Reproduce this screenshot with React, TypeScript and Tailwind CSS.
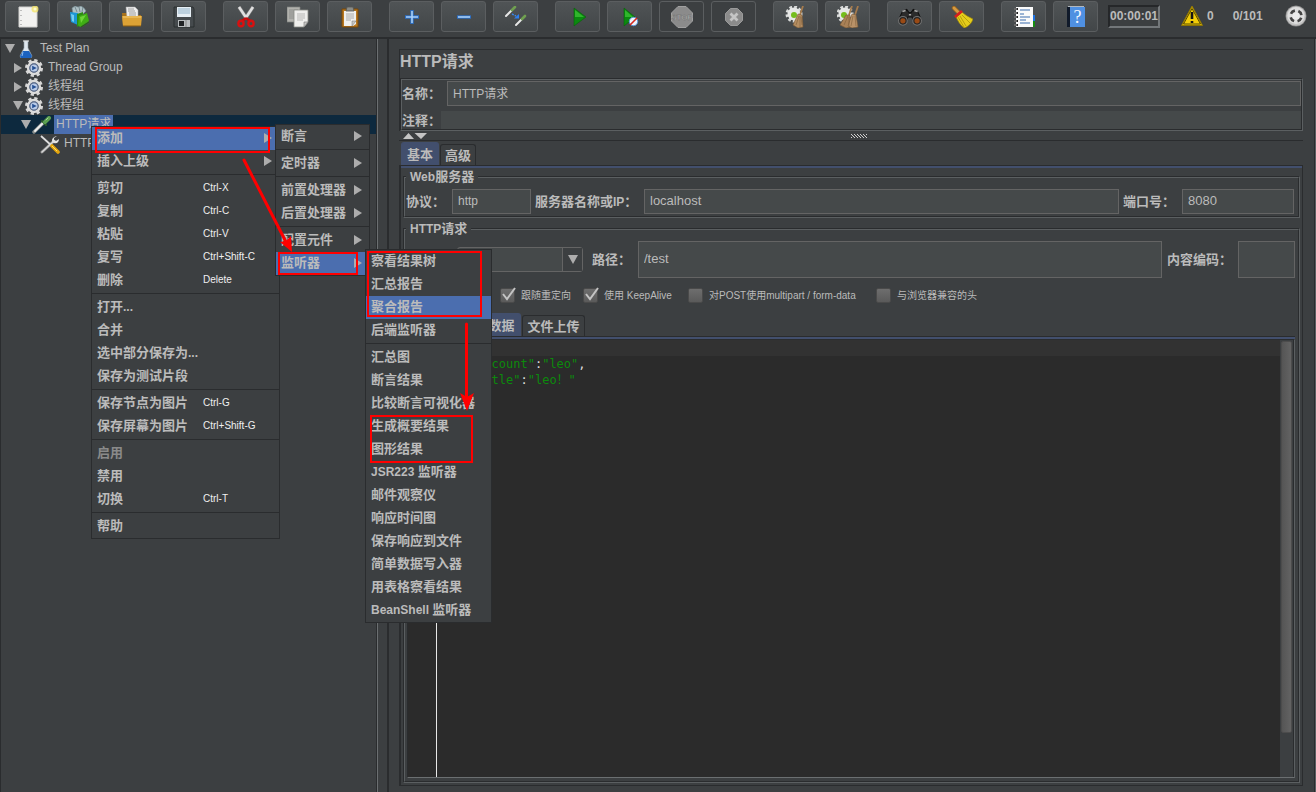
import React from 'react';
import clsx from 'clsx';

/* ---------- Toolbar icons ---------- */

const icon = (children: React.ReactNode, size = 22) => (
  <svg width={size} height={size} viewBox="0 0 22 22" fill="none" aria-hidden="true">
    {children}
  </svg>
);

const NewIcon = icon(
  <>
    <path d="M2 1h18v20H2z" fill="#f2f2f0" stroke="#d2d2d0" />
    <path d="M4 4v1M4 9v1M4 14v1M4 18v1" stroke="#8a8a8a" strokeWidth="1" />
    <circle cx="18" cy="3" r="3.5" fill="#f3e36b" opacity="0.8" />
    <circle cx="18" cy="3" r="1.5" fill="#fffbd0" />
  </>
);

const TemplatesIcon = icon(
  <>
    <path d="M3 2l3-2 3 1 3-1 3 2 2 3-4 4-9-1z" fill="#aebfc4" stroke="#6f858c" strokeWidth="0.6" />
    <path d="M6 1l2 5M10 1l1 5M14 1l-1 5" stroke="#5c7279" strokeWidth="0.7" />
    <path d="M1 6l8 1v12l-7-3z" fill="#1c97d6" />
    <path d="M2 8l3 1v7l-2-1z" fill="#73cdf2" />
    <path d="M8 8l6-2v12l-6 3z" fill="#2c8d12" />
    <path d="M10 10l8-3 2 8-9 6-2-2z" fill="#3fae14" />
    <path d="M11 11l6-2-5 8z" fill="#6fd53a" />
    <path d="M12 21l8-5" stroke="#226f0c" />
  </>
);

const OpenIcon = icon(
  <>
    <path d="M1 7h6l1 2h12v11H2z" fill="#a8721b" />
    <path d="M5 1h9l3 3v8H6z" fill="#efefef" stroke="#aaa" strokeWidth="0.5" />
    <path d="M7 3h6M7 5h7M8 7h7M8 9h7" stroke="#8b8b8b" strokeWidth="0.8" />
    <path d="M1 10h20l-1 10H2z" fill="#dca235" />
    <path d="M2 11h18" stroke="#f4cc75" />
    <path d="M2 20h18" stroke="#8a5c12" />
  </>
);

const SaveIcon = icon(
  <>
    <path d="M1 1h19l1 2v18H1z" fill="#454a4d" stroke="#24282a" strokeWidth="0.8" />
    <path d="M4 1h14v10H4z" fill="#e6eef4" />
    <path d="M5 3h12M5 5h12M5 7h12" stroke="#93b3c9" strokeWidth="1" />
    <path d="M5 14h12v7H5z" fill="#b8bcbe" />
    <path d="M6 15h5v5H6z" fill="#202325" />
    <path d="M13 14v7" stroke="#888" />
  </>
);

const CutIcon = icon(
  <>
    <path d="M4 1l8 12M18 1l-8 12" stroke="#777" strokeWidth="3.8" />
    <path d="M4 1l8 12M18 1l-8 12" stroke="#e0e0e0" strokeWidth="2.6" />
    <path d="M11 12l-4 3M11 12l4 3" stroke="#c60d0d" strokeWidth="2.8" />
    <ellipse cx="6" cy="17.5" rx="2.6" ry="2.8" stroke="#d81010" strokeWidth="2.4" />
    <ellipse cx="16" cy="17.5" rx="2.6" ry="2.8" stroke="#d81010" strokeWidth="2.4" />
  </>
);

const CopyIcon = icon(
  <>
    <path d="M0 1h13v15H0z" fill="#b1b1ad" stroke="#7f817e" strokeWidth="0.7" />
    <path d="M2 4h9M2 6h5M2 8h5M2 10h5M2 12h5" stroke="#8c8e8b" />
    <path d="M7 4h14v12l-4 5H7z" fill="#eeeeec" stroke="#888a85" strokeWidth="0.8" />
    <path d="M10 8h8M10 10h8M10 12h8M10 14h6" stroke="#b7b7b5" />
    <path d="M21 16h-4v5z" fill="#c8c8c6" stroke="#777" strokeWidth="0.6" />
  </>
);

const PasteIcon = icon(
  <>
    <path d="M3 3h16v18H3z" fill="#b9781f" stroke="#79490b" />
    <path d="M5 5h12v13l-3 2H5z" fill="#efefed" />
    <path d="M8 1h6l1 4H7z" fill="#8a8c88" stroke="#555753" strokeWidth="0.8" />
    <path d="M7 8h8M7 10h8M7 12h8M7 14h5" stroke="#aaa" />
    <path d="M17 15h-4v5z" fill="#c9c9c7" stroke="#777" strokeWidth="0.5" />
  </>
);

const PlusIcon = icon(
  <>
    <path d="M11 4v14M4 11h14" stroke="#2c6fc5" strokeWidth="3.4" />
    <path d="M11 5v12M5 11h12" stroke="#a9d0f7" strokeWidth="1.6" />
  </>
);

const MinusIcon = icon(
  <>
    <path d="M4 11h14" stroke="#2c6fc5" strokeWidth="3.4" />
    <path d="M5 11h12" stroke="#a9d0f7" strokeWidth="1.6" />
  </>
);

const ToggleIcon = icon(
  <>
    <path d="M1 10l6-6" stroke="#e6e6e6" strokeWidth="2" strokeLinecap="round" />
    <path d="M7 4l3-3" stroke="#6f9f50" strokeWidth="2.6" strokeLinecap="round" />
    <path d="M11 19l6-6" stroke="#e6e6e6" strokeWidth="2" strokeLinecap="round" />
    <path d="M17 13l3-3" stroke="#6f9f50" strokeWidth="2.6" strokeLinecap="round" />
    <path d="M7 8l4 2" stroke="#3a86e8" strokeWidth="1.5" strokeDasharray="2 1" />
    <path d="M14 8v4.500h-5z" fill="#2d7ff0" />
  </>
);

const StartIcon = icon(
  <>
    <path d="M7 2l12 9-12 9z" fill="#0b8a10" stroke="#0a5f0c" strokeWidth="0.6" />
    <path d="M8 4l9 7H8z" fill="#30b62c" />
  </>
);

const StartNoPauseIcon = icon(
  <>
    <path d="M5 2l11 9-11 9z" fill="#0b8a10" stroke="#0a5f0c" strokeWidth="0.6" />
    <path d="M6 4l8 7H6z" fill="#30b62c" />
    <circle cx="14.500" cy="15.500" r="4.200" fill="#eef4fc" stroke="#5c94d6" strokeWidth="1" />
    <path d="M11 19l7-7" stroke="#d8281e" strokeWidth="1.600" />
  </>
);

const StopIcon = icon(
  <>
    <path d="M7 .5h8l6.500 6.500v8L15 21.500H7L.5 15V7z" fill="#8b8b8b" stroke="#a0a0a0" />
    <text x="11" y="14" textAnchor="middle" fontSize="8" fontWeight="bold" fontFamily="Liberation Sans" fill="#b8b8b8" stroke="#6a6a6a" strokeWidth="0.4">
      STOP
    </text>
  </>
);

const ShutdownIcon = icon(
  <>
    <path d="M7.500 2.500h7l5 5v7l-5 5h-7l-5-5v-7z" fill="#8b8b8b" stroke="#9a9a9a" />
    <path d="M7.500 7.500l7 7M14.500 7.500l-7 7" stroke="#c4c4c4" strokeWidth="2.800" />
  </>
);

const Gear = ({ cx, cy, r }: { cx: number; cy: number; r: number }) => (
  <g>
    <circle cx={cx} cy={cy} r={r} stroke="#d8dad9" strokeWidth="3" strokeDasharray="2.7 2" />
    <circle cx={cx} cy={cy} r={r - 0.5} fill="#e6e7e6" />
  </g>
);

const ClearIcon = icon(
  <>
    <Gear cx={9} cy={8} r={7} />
    <circle cx="9" cy="9" r="3" fill="#75bd1c" />
    <path d="M18 0l-3 9" stroke="#a57b4d" strokeWidth="1.800" />
    <path d="M13 8l4 1 1 12-5 1-5-3z" fill="#b48d61" stroke="#7c5a36" strokeWidth="0.600" />
    <path d="M14 10l-3 9M15 10l0 11M16 11l1 8" stroke="#80603d" strokeWidth="0.600" />
  </>
);

const ClearAllIcon = icon(
  <>
    <Gear cx={8} cy={8} r={7} />
    <circle cx="7" cy="9" r="3" fill="#75bd1c" />
    <path d="M15 0l-3 9M21 0l-3 9" stroke="#a57b4d" strokeWidth="1.800" />
    <path d="M9 9l4 0 1 12-5 1-6-3z" fill="#a98157" stroke="#7c5a36" strokeWidth="0.600" />
    <path d="M15 8l4 1 2 12-6 1-4-2z" fill="#b99268" stroke="#7c5a36" strokeWidth="0.600" />
    <path d="M11 10l-4 9M12 11l0 10M16 10l-2 10M18 10l1 10" stroke="#80603d" strokeWidth="0.600" />
  </>
);

const SearchIcon = icon(
  <>
    <path d="M4 6l4-2 2 3h2l2-3 4 2 4 9h-8l-1-4h-4l-1 4H0z" fill="#2b2b2b" stroke="#111" />
    <path d="M4 6l3-1M15 5l3 1M10 9h2" stroke="#a9a9a9" strokeWidth="1.400" />
    <circle cx="4.500" cy="14.500" r="4" fill="#252525" stroke="#737373" />
    <circle cx="17.500" cy="14.500" r="4" fill="#252525" stroke="#737373" />
    <circle cx="4.500" cy="14.500" r="2.400" fill="#9a4a15" />
    <circle cx="17.500" cy="14.500" r="2.400" fill="#9a4a15" />
  </>,
  24
);

const BroomIcon = icon(
  <>
    <path d="M3 2l6 6" stroke="#96631d" strokeWidth="4.400" strokeLinecap="round" />
    <path d="M3 2l5 5" stroke="#d59a42" strokeWidth="2.800" strokeLinecap="round" />
    <path d="M11 6c3 3 7 5 11 7-1 4-5 8-9 9-4-3-6-7-8-11z" fill="#e5cd1b" stroke="#96830a" strokeWidth="0.700" />
    <path d="M9 10l6 10M11 9l8 8M7 11l6 10" stroke="#a99209" strokeWidth="0.800" />
    <path d="M4 11l7-6" stroke="#d61f1f" strokeWidth="2.800" />
  </>
);

const FunctionsIcon = icon(
  <>
    <path d="M18 9h4v6h-4z" fill="#1e72e2" />
    <path d="M18 15h4v6h-4z" fill="#168c12" />
    <path d="M3 1h17v20H3z" fill="#fafafa" />
    <path d="M7 4h10M7 8h4M7 11h10M7 14h6M7 17h10" stroke="#3a6cae" strokeWidth="1" />
    <path d="M1 3h4M1 7h4M1 11h4M1 15h4M1 19h4" stroke="#1d1d1d" strokeWidth="2" />
    <path d="M1 3h3M1 7h3M1 11h3M1 15h3M1 19h3" stroke="#ddd" strokeWidth="0.800" />
  </>
);

const HelpIcon = icon(
  <>
    <path d="M2 1h3v20H2z" fill="#101a2a" />
    <path d="M5 1h15v20H5z" fill="#4f90e2" />
    <path d="M3 0h16" stroke="#d5dbe2" strokeWidth="1.500" />
    <text x="12.500" y="17" textAnchor="middle" fontSize="18" fontFamily="Liberation Serif" fill="#f4f8ff">
      ?
    </text>
  </>
);

const WarningIcon = icon(
  <>
    <path d="M11 1L21.500 20.500H.5z" fill="#f3cd08" stroke="#8d7303" />
    <path d="M11 3.500L19.500 19h-17z" stroke="#2c2600" strokeWidth="0.800" />
    <path d="M11 7v7M11 16v2" stroke="#151515" strokeWidth="2.600" />
  </>
);

const StatusIcon = icon(
  <>
    <circle cx="11" cy="11" r="10.500" fill="#8c8c8c" />
    <circle cx="11" cy="11" r="9.800" fill="#c2c2c2" />
    <circle cx="11" cy="10.500" r="8.500" fill="#dedede" />
    <circle cx="11" cy="11" r="5.500" stroke="#444" strokeWidth="2.600" strokeDasharray="5 3.640" strokeDashoffset="-1.800" />
    <circle cx="11" cy="11" r="3.500" fill="#ececec" />
  </>
);

/* ---------- Tree icons ---------- */

const FlaskIcon = (
  <svg width="14" height="18" viewBox="0 0 14 18" aria-hidden="true">
    <path d="M5 1h4v7l4 8-1 2H2l-1-2 4-8z" fill="#dfe7ee" stroke="#8e9aa5" strokeWidth="0.6" />
    <path d="M4 11h6l3 5-1 2H2l-1-2z" fill="#1b62c0" />
    <path d="M4 12l-1 4" stroke="#8fc0f5" />
    <path d="M4 1h6" stroke="#f5f5f5" />
  </svg>
);

const GearIcon = (
  <svg width="18" height="18" viewBox="0 0 20 20" fill="none" aria-hidden="true">
    <circle cx="10" cy="10" r="8.5" stroke="#d6d6d6" strokeWidth="3" strokeDasharray="3.6 3.075" />
    <circle cx="10" cy="10" r="6.5" stroke="#dcdcdc" strokeWidth="3" />
    <circle cx="10" cy="10" r="4.6" fill="#b9cbe8" stroke="#5a6c8e" strokeWidth="1.4" />
    <path d="M8 7.500l5 2.500-5 2.500z" fill="#244f94" />
  </svg>
);

const PipetteIcon = (
  <svg width="20" height="18" viewBox="0 0 20 18" fill="none" strokeLinecap="round" aria-hidden="true">
    <path d="M2 16L11 7" stroke="#8b8f8d" strokeWidth="3.4" />
    <path d="M3 15l8-8" stroke="#f0f0f0" strokeWidth="1.8" />
    <path d="M10 5l4 4" stroke="#2d5c2a" strokeWidth="2" />
    <path d="M13 6l4-4" stroke="#5b9f50" strokeWidth="4" />
    <path d="M14 4l2-2" stroke="#a3d396" strokeWidth="1" />
  </svg>
);

const ToolsIcon = (
  <svg width="20" height="20" viewBox="0 0 20 20" fill="none" aria-hidden="true">
    <path d="M2 18L14 7" stroke="#8f8f8f" strokeWidth="3" strokeLinecap="round" />
    <path d="M2 18L14 7" stroke="#d8d8d8" strokeWidth="1.400" strokeLinecap="round" />
    <path d="M17 2l-3 2v2l2 1 3-2c0 3-2 5-5 4s-3-6 3-7z" fill="#e2e2e2" />
    <path d="M1 2l11 10" stroke="#dedede" strokeWidth="1.800" />
    <path d="M12 12l6 6" stroke="#e3a50d" strokeWidth="3.600" strokeLinecap="round" />
    <path d="M12 12l5 5" stroke="#ffe064" strokeWidth="1" />
  </svg>
);

/* ---------- Data ---------- */

interface ToolItem {
  label: string;
  icon: React.ReactNode;
  disabled?: boolean;
}

const toolGroups: ToolItem[][] = [
  [
    { label: '新建', icon: NewIcon },
    { label: '模板', icon: TemplatesIcon },
    { label: '打开', icon: OpenIcon },
    { label: '保存', icon: SaveIcon },
  ],
  [
    { label: '剪切', icon: CutIcon },
    { label: '复制', icon: CopyIcon },
    { label: '粘贴', icon: PasteIcon },
  ],
  [
    { label: '展开', icon: PlusIcon },
    { label: '折叠', icon: MinusIcon },
    { label: '切换', icon: ToggleIcon },
  ],
  [
    { label: '启动', icon: StartIcon },
    { label: '不停顿开始', icon: StartNoPauseIcon },
    { label: '停止', icon: StopIcon, disabled: true },
    { label: '关闭', icon: ShutdownIcon, disabled: true },
  ],
  [
    { label: '清除', icon: ClearIcon },
    { label: '清除全部', icon: ClearAllIcon },
  ],
  [
    { label: '查找', icon: SearchIcon },
    { label: '重置搜索', icon: BroomIcon },
  ],
  [
    { label: '函数助手', icon: FunctionsIcon },
    { label: '帮助', icon: HelpIcon },
  ],
];

interface TreeNode {
  label: string;
  indent: string;
  icon: React.ReactNode;
  state?: 'open' | 'closed';
  selected?: boolean;
}

const tree: TreeNode[] = [
  { label: 'Test Plan', indent: 'pl-[3px]', icon: FlaskIcon, state: 'open' },
  { label: 'Thread Group', indent: 'pl-[11px]', icon: GearIcon, state: 'closed' },
  { label: '线程组', indent: 'pl-[11px]', icon: GearIcon, state: 'closed' },
  { label: '线程组', indent: 'pl-[11px]', icon: GearIcon, state: 'open' },
  { label: 'HTTP请求', indent: 'pl-[19px]', icon: PipetteIcon, state: 'open', selected: true },
  { label: 'HTTP信息头管理器', indent: 'pl-[27px]', icon: ToolsIcon },
];

interface MenuEntry {
  label: string;
  shortcut?: string;
  submenu?: boolean;
  active?: boolean;
  disabled?: boolean;
}

const mainMenu: MenuEntry[][] = [
  [
    { label: '添加', submenu: true, active: true },
    { label: '插入上级', submenu: true },
  ],
  [
    { label: '剪切', shortcut: 'Ctrl-X' },
    { label: '复制', shortcut: 'Ctrl-C' },
    { label: '粘贴', shortcut: 'Ctrl-V' },
    { label: '复写', shortcut: 'Ctrl+Shift-C' },
    { label: '删除', shortcut: 'Delete' },
  ],
  [{ label: '打开...' }, { label: '合并' }, { label: '选中部分保存为...' }, { label: '保存为测试片段' }],
  [
    { label: '保存节点为图片', shortcut: 'Ctrl-G' },
    { label: '保存屏幕为图片', shortcut: 'Ctrl+Shift-G' },
  ],
  [{ label: '启用', disabled: true }, { label: '禁用' }, { label: '切换', shortcut: 'Ctrl-T' }],
  [{ label: '帮助' }],
];

const addMenu: MenuEntry[][] = [
  [{ label: '断言', submenu: true }],
  [{ label: '定时器', submenu: true }],
  [
    { label: '前置处理器', submenu: true },
    { label: '后置处理器', submenu: true },
  ],
  [
    { label: '配置元件', submenu: true },
    { label: '监听器', submenu: true, active: true },
  ],
];

const listenerMenu: MenuEntry[][] = [
  [{ label: '察看结果树' }, { label: '汇总报告' }, { label: '聚合报告', active: true }, { label: '后端监听器' }],
  [
    { label: '汇总图' },
    { label: '断言结果' },
    { label: '比较断言可视化器' },
    { label: '生成概要结果' },
    { label: '图形结果' },
    { label: 'JSR223 监听器' },
    { label: '邮件观察仪' },
    { label: '响应时间图' },
    { label: '保存响应到文件' },
    { label: '简单数据写入器' },
    { label: '用表格察看结果' },
    { label: 'BeanShell 监听器' },
  ],
];

const options = [
  { label: '自动重定向', checked: false, width: 'w-[90px]' },
  { label: '跟随重定向', checked: true, width: 'w-[83px]' },
  { label: '使用 KeepAlive', checked: true, width: 'w-[105px]' },
  { label: '对POST使用multipart / form-data', checked: false, width: 'w-[188px]' },
  { label: '与浏览器兼容的头', checked: false, width: 'w-[110px]' },
];

/* ---------- Small parts ---------- */

// Latin runs are set one size smaller than the Chinese around them
function Mixed({ text }: { text: string }) {
  return (
    <span className="whitespace-pre">
      {text.split(/([\x20-\x7e]+)/).map((part, i) => (
        <span key={i} className={i % 2 ? 'text-[12px]' : 'text-[13px]'}>
          {part}
        </span>
      ))}
    </span>
  );
}

function Triangle({ open }: { open?: boolean }) {
  return open ? (
    <svg width="10" height="9" viewBox="0 0 10 9" aria-hidden="true">
      <path d="M0 0h10L5 9z" fill="#adadad" />
    </svg>
  ) : (
    <svg width="8" height="10" viewBox="0 0 8 10" aria-hidden="true">
      <path d="M0 0v10l8-5z" fill="#adadad" />
    </svg>
  );
}

function Etched({ className, innerClass, children, ...rest }: React.HTMLAttributes<HTMLDivElement> & { innerClass?: string }) {
  return (
    <div {...rest} className={clsx('flex flex-col border border-t-[#2a2c2e] border-l-[#2a2c2e] border-r-[#5b5f61] border-b-[#5b5f61]', className)}>
      <div className={clsx('flex flex-1 flex-col border border-t-[#5b5f61] border-l-[#5b5f61] border-r-[#2a2c2e] border-b-[#2a2c2e]', innerClass)}>
        {children}
      </div>
    </div>
  );
}

function Field({ id, value, className }: { id: string; value: string; className: string }) {
  return (
    <input
      id={id}
      type="text"
      defaultValue={value}
      className={clsx('min-w-0 border border-[#646464] bg-[#45494a] px-[5px] pb-[2px] text-[#bbbbbb] outline-none', className)}
    />
  );
}

function FieldLabel({ id, text, className }: { id: string; text: string; className: string }) {
  return (
    <label htmlFor={id} className={clsx('shrink-0 font-bold', className)}>
      <Mixed text={text} />
    </label>
  );
}

function Tab({ text, selected, className }: { text: string; selected?: boolean; className: string }) {
  return (
    <button
      type="button"
      role="tab"
      aria-selected={!!selected}
      className={clsx(
        'flex items-center justify-center rounded-t-[3px] border border-b-0 font-bold',
        selected ? 'h-[23px] border-[#424f6d] bg-[#424f6d]' : 'h-[21px] border-[#2a2c2e]',
        className
      )}
    >
      <Mixed text={text} />
    </button>
  );
}

function Menu({ groups, label, className }: { groups: MenuEntry[][]; label: string; className: string }) {
  return (
    <div role="menu" aria-label={label} className={clsx('absolute border border-[#2a2c2e] bg-[#3c3f41]', className)}>
      {groups.map((group, i) => (
        <div key={i}>
          {i > 0 && (
            <div role="separator" className="h-1 pt-px">
              <div className="h-px bg-[#2a2c2e]" />
            </div>
          )}
          {group.map((item) => (
            <button
              key={item.label}
              type="button"
              role="menuitem"
              disabled={item.disabled}
              className={clsx(
                'flex h-[23px] w-full items-center pr-[7px] pb-[2px] pl-[5px] font-bold',
                item.active && 'bg-[#4b6eaf]',
                item.disabled && 'text-[#8a8a8a]'
              )}
            >
              <span className={clsx('text-left', item.shortcut ? 'w-[106px]' : 'flex-1')}>
                <Mixed text={item.label} />
              </span>
              {item.shortcut && <span className="text-[10px] font-normal text-[#f0f0f0]">{item.shortcut}</span>}
              {item.submenu && <Triangle />}
            </button>
          ))}
        </div>
      ))}
    </div>
  );
}

/* ---------- Sections ---------- */

function Toolbar() {
  return (
    <header className="flex shrink-0 items-start border-b-2 border-[#2a2c2e] pt-px pb-[5px] pl-[5px]">
      <div className="flex gap-[17px]">
        {toolGroups.map((group, i) => (
          <div key={i} className="flex gap-[7px]">
            {group.map((tool) => (
              <button
                key={tool.label}
                type="button"
                title={tool.label}
                disabled={tool.disabled}
                className={clsx(
                  'flex h-[31px] w-[45px] items-center justify-center rounded-[3px] border border-[#5b5e60]',
                  !tool.disabled && 'bg-linear-to-b from-[#505456] to-[#424648]'
                )}
              >
                {tool.icon}
              </button>
            ))}
          </div>
        ))}
      </div>
      <div className="flex h-[30px] flex-1 items-center text-[12px] font-bold">
        <div className="ml-[10px] flex h-[23px] w-[52px] items-center justify-center border-2 border-t-[#252729] border-l-[#252729] border-r-[#73777a] border-b-[#73777a]">
          00:00:01
        </div>
        <div className="ml-[21px] flex items-center gap-1">
          {WarningIcon}
          <span>0</span>
        </div>
        <span className="ml-[19px]">0/101</span>
        <span className="mr-[9px] ml-auto">{StatusIcon}</span>
      </div>
    </header>
  );
}

function TestTree() {
  return (
    <aside className="w-[378px] shrink-0 border-r border-[#6b6f71]">
      <ul role="tree" className="h-full border-x border-[#2a2c2e]">
        {tree.map((node, i) => (
          <li
            key={i}
            role="treeitem"
            aria-selected={!!node.selected}
            className={clsx('flex h-[19px] items-center', node.indent, node.selected && 'bg-[#0d293e]')}
          >
            <span className="flex w-[11px] justify-center">{node.state && <Triangle open={node.state === 'open'} />}</span>
            <span className="ml-px flex w-5 justify-center">{node.icon}</span>
            <span className={clsx('ml-[2px] flex h-[19px] items-center px-[2px] pb-px text-[12px]', node.selected && 'bg-[#4b6eaf]')}>
              {node.label}
            </span>
          </li>
        ))}
      </ul>
    </aside>
  );
}

function HeaderForm() {
  return (
    <section className="border-t border-l border-[#2a2c2e]">
      <h1 className="flex h-7 items-center pb-1 text-[16px] font-bold">HTTP请求</h1>
      <Etched innerClass="gap-[5px] pt-px">
        <div className="flex items-center">
          <FieldLabel id="name" text="名称：" className="w-[45px]" />
          <Field id="name" value="HTTP请求" className="h-[25px] flex-1 text-[12px]" />
        </div>
        <div className="flex items-center">
          <FieldLabel id="comment" text="注释：" className="w-[39px]" />
          <input id="comment" type="text" className="h-[18px] min-w-0 flex-1 bg-[#45494a] px-1 text-[12px] outline-none" />
        </div>
      </Etched>
    </section>
  );
}

function Splitter() {
  return (
    <div className="flex h-[10px] items-center border-b border-[#2a2c2e] pl-1">
      <svg width="24" height="6" viewBox="0 0 24 6" aria-hidden="true">
        <path d="M0 6h11L5.500 0zM11.500 0H24l-6 6z" fill="#c4c4c4" />
      </svg>
      <span className="mr-3 flex flex-1 justify-center">
        <svg width="16" height="4" viewBox="0 0 16 4" shapeRendering="crispEdges" aria-hidden="true">
          <path d="M0 .5h16M2 2.500h14" stroke="#d0d0d0" strokeDasharray="1 2" />
          <path d="M1 1.500h15M0 3.500h16" stroke="#d0d0d0" strokeDasharray="1 2" />
        </svg>
      </span>
    </div>
  );
}

function GroupTitle({ id, text }: { id: string; text: string }) {
  return (
    <h2 id={id} className="-mt-[9px] mb-1 ml-px flex h-4 items-center self-start bg-[#3c3f41] px-1 pb-px font-bold">
      <Mixed text={text} />
    </h2>
  );
}

function BodyEditor() {
  return (
    <div className="flex flex-1 border border-t-[#2a2c2e] border-l-[#2a2c2e] border-r-[#5b5f61] border-b-[#6b6f71] bg-[#2b2b2b]">
      <div className="w-[29px] border-r border-[#e8e8e8] pr-1 text-right font-['DejaVu_Sans_Mono',monospace] text-[12px] leading-4 text-[#8a8a8a]">
        {[1, 2, 3, 4].map((n) => (
          <div key={n}>{n}</div>
        ))}
      </div>
      <pre className="flex-1 font-['DejaVu_Sans_Mono','Noto_Sans_CJK_SC',monospace] text-[12px] leading-4 text-[#dddddd]">
        <div className="h-4 bg-[#323232] pl-1">{'{'}</div>
        <div className="h-4 pl-1">
          {'    '}
          <span className="text-[#0c8a0c]">"account"</span>:<span className="text-[#0c8a0c]">"leo"</span>,
        </div>
        <div className="h-4 pl-1">
          {'    '}
          <span className="text-[#0c8a0c]">"title"</span>:<span className="text-[#0c8a0c]">"leo！"</span>
        </div>
        <div className="h-4 pl-1">{'}'}</div>
      </pre>
      <div className="w-[14px] border-r border-[#2a2c2e] bg-[#3c3f41] px-px pt-px">
        <div className="h-[90%] rounded-[2px] border border-[#4c4c4c] bg-linear-to-r from-[#555555] to-[#636363]" />
      </div>
    </div>
  );
}

function RequestTabs() {
  return (
    <section className="flex flex-1 flex-col pt-px">
      <div role="tablist" className="flex items-end gap-px pl-[2px]">
        <Tab text="基本" selected className="w-[38px]" />
        <Tab text="高级" className="w-[36px]" />
      </div>
      <div className="flex flex-1 flex-col border border-l-2 border-[#2a2c2e]">
        <div className="h-[2px] bg-[#424f6d]" />
        <div className="flex flex-1 flex-col gap-[10px] px-[2px] pt-2 pb-[2px]">
          <Etched role="group" aria-labelledby="web-server">
            <GroupTitle id="web-server" text="Web服务器" />
            <div className="flex items-center pr-1 pb-[2px] pl-px">
              <FieldLabel id="protocol" text="协议：" className="w-[46px]" />
              <Field id="protocol" value="http" className="h-[25px] w-[79px] text-[12px]" />
              <FieldLabel id="server" text="服务器名称或IP：" className="ml-1 w-[109px]" />
              <Field id="server" value="localhost" className="h-[25px] flex-1 text-[13px]" />
              <FieldLabel id="port" text="端口号：" className="ml-1 w-[59px]" />
              <Field id="port" value="8080" className="h-[25px] w-[112px] text-[13px]" />
            </div>
          </Etched>

          <Etched role="group" aria-labelledby="http-request" className="flex-1" innerClass="pb-[3px]">
            <GroupTitle id="http-request" text="HTTP请求" />
            <div className="flex items-center pr-[3px] pl-px">
              <FieldLabel id="method" text="方法：" className="w-[51px]" />
              <div className="relative">
                <select
                  id="method"
                  defaultValue="POST"
                  className="h-[25px] w-[126px] appearance-none rounded-[3px] border border-[#646464] bg-[#45494a] text-[12px] outline-none"
                >
                  <option>GET</option>
                  <option>POST</option>
                </select>
                <span className="pointer-events-none absolute inset-y-px right-px flex w-5 items-center justify-center border-l border-[#646464] bg-[#3c3f41]">
                  <Triangle open />
                </span>
              </div>
              <FieldLabel id="path" text="路径：" className="ml-[9px] w-[46px]" />
              <Field id="path" value="/test" className="h-[37px] flex-1 text-[13px]" />
              <FieldLabel id="encoding" text="内容编码：" className="ml-[5px] w-[71px]" />
              <Field id="encoding" value="" className="h-[37px] w-[57px] text-[13px]" />
            </div>

            <div className="mt-[9px] flex h-4 items-center pl-[5px] text-[10px]">
              {options.map((option) => (
                <label key={option.label} className={clsx('flex items-center gap-[6px] whitespace-nowrap', option.width)}>
                  <span className="relative flex">
                    <input
                      type="checkbox"
                      defaultChecked={option.checked}
                      className="size-[15px] appearance-none rounded-[2px] border border-[#4a4a4a] bg-linear-to-b from-[#6e6e6e] to-[#5a5a5a]"
                    />
                    {option.checked && (
                      <svg className="pointer-events-none absolute -top-px left-0" width="16" height="15" viewBox="0 0 16 15" fill="none" aria-hidden="true">
                        <path d="M3 7l4 5 8-11" stroke="#c4c4c4" strokeWidth="2" />
                      </svg>
                    )}
                  </span>
                  <span className="pt-px">{option.label}</span>
                </label>
              ))}
            </div>

            <div role="tablist" className="mt-[10px] flex items-end gap-px pl-px">
              <Tab text="参数" className="w-[36px]" />
              <Tab text="消息体数据" selected className="w-[78px]" />
              <Tab text="文件上传" className="w-[63px]" />
            </div>
            <div className="mr-[3px] ml-[2px] flex flex-1 flex-col border-t border-[#2a2c2e]">
              <div className="h-[2px] bg-[#424f6d]" />
              <BodyEditor />
            </div>
          </Etched>
        </div>
      </div>
    </section>
  );
}

// Red boxes and arrows drawn on top of the open menus
function Annotations() {
  return (
    <svg className="pointer-events-none absolute top-0 left-0" width="500" height="480" viewBox="0 0 500 480" fill="none" aria-hidden="true">
      <g stroke="#ff0000" strokeWidth="2">
        <rect x="96" y="128" width="173" height="24" />
        <rect x="279" y="253" width="78" height="21" />
        <rect x="368" y="252" width="113" height="64" />
        <rect x="371" y="416" width="101" height="46" />
      </g>
      <path d="M244 160l42 82M466.500 324v73" stroke="#ff0000" strokeWidth="3" strokeLinecap="round" />
      <path d="M292 252l-12-10 6-1 5-5zM467 411l-7-18 7 4 7-4z" fill="#ff0000" />
    </svg>
  );
}

export default function App() {
  return (
    <div className="relative flex h-screen flex-col overflow-hidden bg-[#3c3f41] font-['Liberation_Sans','Noto_Sans_CJK_SC',sans-serif] text-[13px] leading-none text-[#bbbbbb]">
      <Toolbar />
      <div className="flex min-h-0 flex-1">
        <TestTree />
        <main className="ml-[9px] flex min-w-0 flex-1 flex-col border-r border-l-2 border-r-[#5b5f61] border-l-[#2a2c2e]">
          <div className="flex flex-1 flex-col border-r border-[#2a2c2e] pt-[10px] pr-[11px] pb-[6px] pl-[10px]">
            <HeaderForm />
            <Splitter />
            <RequestTabs />
          </div>
        </main>
      </div>

      <Menu groups={mainMenu} label="HTTP请求" className="top-[126px] left-[91px] w-[189px]" />
      <Menu groups={addMenu} label="添加" className="top-[124px] left-[275px] w-[95px]" />
      <Menu groups={listenerMenu} label="监听器" className="top-[249px] left-[365px] w-[127px]" />
      <Annotations />
    </div>
  );
}
